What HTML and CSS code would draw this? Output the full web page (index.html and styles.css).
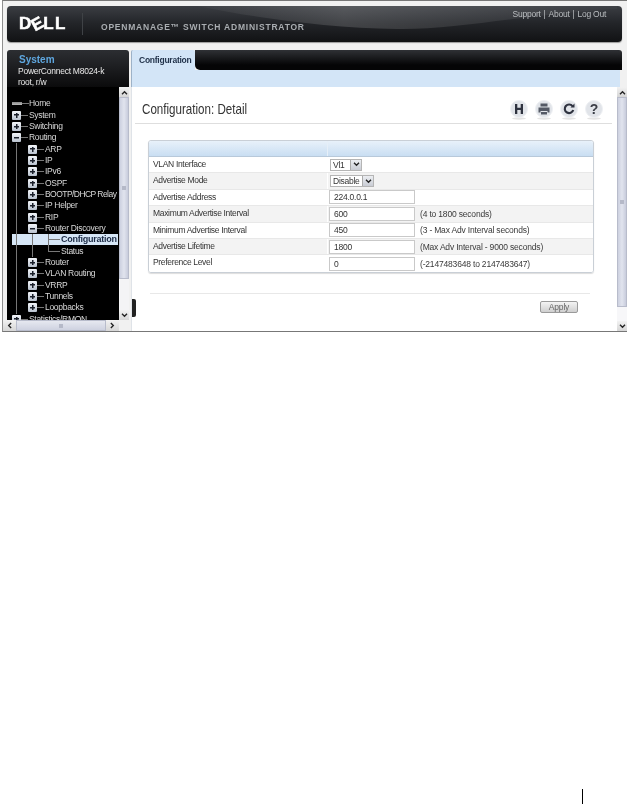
FILE: index.html
```html
<!DOCTYPE html>
<html lang="en">
<head>
<meta charset="utf-8">
<title>Configuration: Detail</title>
<link rel="stylesheet" href="styles.css">
</head>
<body>
<div class="frame">
  <header class="masthead">
    <svg class="swoosh" viewBox="0 0 615 36" preserveAspectRatio="none" aria-hidden="true">
      <defs>
        <linearGradient id="sw" x1="0" x2="1" y1="0" y2="0">
          <stop offset="0" stop-color="#fff" stop-opacity=".02"/>
          <stop offset=".35" stop-color="#fff" stop-opacity=".15"/>
          <stop offset="1" stop-color="#fff" stop-opacity=".02"/>
        </linearGradient>
      </defs>
      <path d="M190 0C250 12 320 22 390 23C450 24 520 8 610 3L610 0Z" fill="url(#sw)"/>
    </svg>
    <div class="logo">D<span class="logo-e">E</span>LL</div>
    <div class="product">OPENMANAGE™ SWITCH ADMINISTRATOR</div>
    <nav class="links">Support<span class="sep">|</span>About<span class="sep">|</span>Log Out</nav>
  </header>

  <div class="main">
    <aside class="sidebar">
      <div class="sys">
        <div class="sys-name">System</div>
        <div>PowerConnect M8024-k</div>
        <div>root, r/w</div>
      </div>
      <div class="sys-body">
        <div class="tree">
          <div class="row"><i class="leaf"></i><i class="dash short"></i><span>Home</span></div>
          <div class="row"><i class="exp plus"></i><i class="dash"></i><span>System</span></div>
          <div class="row"><i class="exp plus"></i><i class="dash"></i><span>Switching</span></div>
          <div class="row"><i class="exp"></i><i class="dash"></i><span>Routing</span></div>
          <div class="row"><i class="guide"></i><i class="exp plus"></i><i class="dash"></i><span>ARP</span></div>
          <div class="row"><i class="guide"></i><i class="exp plus"></i><i class="dash"></i><span>IP</span></div>
          <div class="row"><i class="guide"></i><i class="exp plus"></i><i class="dash"></i><span>IPv6</span></div>
          <div class="row"><i class="guide"></i><i class="exp plus"></i><i class="dash"></i><span>OSPF</span></div>
          <div class="row"><i class="guide"></i><i class="exp plus"></i><i class="dash"></i><span class="tight">BOOTP/DHCP Relay</span></div>
          <div class="row"><i class="guide"></i><i class="exp plus"></i><i class="dash"></i><span>IP Helper</span></div>
          <div class="row"><i class="guide"></i><i class="exp plus"></i><i class="dash"></i><span>RIP</span></div>
          <div class="row"><i class="guide"></i><i class="exp"></i><i class="dash"></i><span>Router Discovery</span></div>
          <div class="row selected"><i class="guide"></i><i class="guide"></i><i class="tee"></i><span>Configuration</span></div>
          <div class="row"><i class="guide"></i><i class="guide"></i><i class="elbow"></i><span>Status</span></div>
          <div class="row"><i class="guide"></i><i class="exp plus"></i><i class="dash"></i><span>Router</span></div>
          <div class="row"><i class="guide"></i><i class="exp plus"></i><i class="dash"></i><span>VLAN Routing</span></div>
          <div class="row"><i class="guide"></i><i class="exp plus"></i><i class="dash"></i><span>VRRP</span></div>
          <div class="row"><i class="guide"></i><i class="exp plus"></i><i class="dash"></i><span>Tunnels</span></div>
          <div class="row"><i class="guide"></i><i class="exp plus"></i><i class="dash"></i><span>Loopbacks</span></div>
          <div class="row"><i class="exp plus"></i><i class="dash"></i><span>Statistics/RMON</span></div>
        </div>
        <div class="vbar">
          <div class="sb-btn"><svg viewBox="0 0 8 6"><path d="M1 5l3-3 3 3" /></svg></div>
          <div class="sb-thumb narrow"><i class="grip"></i></div>
          <div class="sb-track"></div>
          <div class="sb-btn"><svg viewBox="0 0 8 6"><path d="M1 1l3 3 3-3" /></svg></div>
        </div>
      </div>
      <div class="hbar">
        <div class="sb-btn h"><svg viewBox="0 0 6 8"><path d="M5 1L2 4l3 3" /></svg></div>
        <div class="sb-thumb horiz"><i class="grip"></i></div>
        <div class="sb-btn h"><svg viewBox="0 0 6 8"><path d="M1 1l3 3-3 3" /></svg></div>
      </div>
    </aside>

    <section class="panel">
      <div class="tabs">
        <div class="tab">Configuration</div>
        <div class="tabfill"></div>
      </div>
      <div class="band"></div>
      <div class="pane">
        <div class="handle"></div>
        <main class="page">
          <div class="titlebar">
            <h1>Configuration: Detail</h1>
            <div class="tools">
              <svg class="tool" viewBox="0 0 18 20"><ellipse class="shade" cx="9" cy="18.500" rx="7" ry="1.200"/><circle class="disc" cx="9" cy="9" r="8.500"/><path class="ink" d="M5 4h2.300v3.800h3.400V4H13v10h-2.300v-4H7.300v4H5z"/></svg>
              <svg class="tool" viewBox="0 0 18 20"><ellipse class="shade" cx="9" cy="18.500" rx="7" ry="1.200"/><circle class="disc" cx="9" cy="9" r="8.500"/><path class="ink soft" d="M5.500 3.500h7v3h-7zM3.500 7.500h11v5h-2v-1.500h-7v1.500h-2zM6 12h6v2.500H6z"/></svg>
              <svg class="tool" viewBox="0 0 18 20"><ellipse class="shade" cx="9" cy="18.500" rx="7" ry="1.200"/><circle class="disc" cx="9" cy="9" r="8.500"/><path class="arc" d="M12.500 6.200A4.300 4.300 0 1 0 13.200 10"/><path class="ink" d="M10.500 7.500h4v-4z"/></svg>
              <svg class="tool" viewBox="0 0 18 20"><ellipse class="shade" cx="9" cy="18.500" rx="7" ry="1.200"/><circle class="disc" cx="9" cy="9" r="8.500"/><text class="qm" x="9" y="13.800" text-anchor="middle">?</text></svg>
            </div>
          </div>

          <div class="card">
            <div class="card-head"><div></div><div class="head-cell"></div></div>
            <div class="f-row"><div class="f-label">VLAN Interface</div><div class="f-val"><div class="select small"><span>Vl1</span><b><svg viewBox="0 0 8 6"><path d="M1 1l3 3 3-3"/></svg></b></div></div></div>
            <div class="f-row alt"><div class="f-label">Advertise Mode</div><div class="f-val"><div class="select"><span>Disable</span><b><svg viewBox="0 0 8 6"><path d="M1 1l3 3 3-3"/></svg></b></div></div></div>
            <div class="f-row"><div class="f-label">Advertise Address</div><div class="f-val"><input class="inp" value="224.0.0.1"></div></div>
            <div class="f-row alt"><div class="f-label">Maximum Advertise Interval</div><div class="f-val"><input class="inp" value="600"><span class="hint">(4 to 1800 seconds)</span></div></div>
            <div class="f-row"><div class="f-label">Minimum Advertise Interval</div><div class="f-val"><input class="inp" value="450"><span class="hint">(3 - Max Adv Interval seconds)</span></div></div>
            <div class="f-row alt"><div class="f-label">Advertise Lifetime</div><div class="f-val"><input class="inp" value="1800"><span class="hint">(Max Adv Interval - 9000 seconds)</span></div></div>
            <div class="f-row last"><div class="f-label">Preference Level</div><div class="f-val"><input class="inp" value="0"><span class="hint">(-2147483648 to 2147483647)</span></div></div>
          </div>

          <div class="actions"><button class="apply" type="button">Apply</button></div>
        </main>
        <div class="vbar main-bar">
          <div class="sb-btn"><svg viewBox="0 0 8 6"><path d="M1 5l3-3 3 3" /></svg></div>
          <div class="sb-thumb tall"><i class="grip"></i></div>
          <div class="sb-track"></div>
          <div class="sb-btn"><svg viewBox="0 0 8 6"><path d="M1 1l3 3 3-3" /></svg></div>
        </div>
      </div>
    </section>
  </div>
</div>
<div class="page-marker"></div>
</body>
</html>
```
FILE: styles.css
```css
* { box-sizing: border-box; }
html, body { margin: 0; padding: 0; background: #fff; }
body { font-family: "Liberation Sans", Arial, sans-serif; font-size: 8.5px; letter-spacing: -.25px; color: #333; }

.frame {
  width: 625px; height: 332px; margin-left: 2px;
  display: flex; flex-direction: column;
  padding: 5px 0 0 4px;
  background: #f1f1f1;
  border-left: 1px solid #8f8f8f; border-top: 1px solid #777; border-bottom: 1px solid #777;
  filter: blur(.3px);
}

/* masthead */
.masthead {
  position: relative; flex: none;
  height: 36px; margin: 0 5px 8px 0;
  display: flex; align-items: center;
  padding-left: 12px;
  border-radius: 4px;
  background: linear-gradient(#3b3e43, #24262a 45%, #111214);
  box-shadow: 0 1px 1px #999;
  overflow: hidden;
}
.swoosh { position: absolute; left: 0; top: 0; width: 100%; height: 100%; }
.logo {
  width: 64px; height: 22px; line-height: 22px; flex: none;
  font-size: 17px; font-weight: 700; color: #fff;
  letter-spacing: 1.3px;
  -webkit-text-stroke: .5px #fff;
  border-right: 1px solid #3f4246;
  margin-right: 18px;
}
.logo-e { display: inline-block; transform: rotate(-28deg); margin: 0 -1px; }
.product {
  font-size: 8.5px; font-weight: 700; letter-spacing: .78px;
  color: #a9adb1; margin-top: 5px; white-space: nowrap;
}
.links {
  margin-left: auto; align-self: flex-start;
  margin-top: 3px; padding-right: 16px;
  line-height: 10px; color: #b9bcbf; white-space: nowrap; position: relative;
}
.sep { margin: 0 3px; }

/* main area */
.main { flex: 1; min-height: 0; display: flex; }

/* sidebar */
.sidebar { width: 122px; flex: none; display: flex; flex-direction: column; margin-right: 2px; }
.sys {
  height: 37px; flex: none; padding: 4px 0 0 11px;
  background: linear-gradient(#2c2e32, #0b0b0c);
  border-radius: 3px 3px 0 0;
  color: #e8e8e8; line-height: 10.500px;
}
.sys-name { font-size: 10px; font-weight: 700; color: #5ea6de; line-height: 12px; letter-spacing: 0; padding-left: 1px; }
.sys-body { flex: 1; min-height: 0; display: flex; }
.tree {
  flex: 1; min-width: 0; overflow: hidden;
  background: #000; padding-top: 11px; color: #d9d9d9; letter-spacing: -.3px;
}
.tight { letter-spacing: -.55px; }
.row {
  height: 11.35px; display: flex; align-items: center;
  margin-left: 5px; white-space: nowrap; line-height: 11px;
}
.row i { display: block; flex: none; height: 100%; }
.row .exp {
  width: 9px; height: 9px;
  background:
    linear-gradient(#1a1f2a, #1a1f2a) center / 5px 1.5px no-repeat,
    linear-gradient(#f2f5f9, #b9c2cf);
  border-radius: 1px;
}
.row .exp.plus {
  background:
    linear-gradient(#1a1f2a, #1a1f2a) center / 5px 1.5px no-repeat,
    linear-gradient(#1a1f2a, #1a1f2a) center / 1.5px 5px no-repeat,
    linear-gradient(#f2f5f9, #b9c2cf);
}
.row .leaf { width: 10px; height: 3px; background: linear-gradient(#888, #bbb); }
.row .dash {
  width: 8px;
  background: linear-gradient(#777, #777) left center / 7px 1px no-repeat;
}
.row .dash.short { width: 7px; }
.row .guide {
  width: 16px;
  background: linear-gradient(#777, #777) 4px 0 / 1px 100% no-repeat;
}
.row .tee, .row .elbow {
  width: 17px;
  background:
    linear-gradient(#777, #777) 4px center / 12px 1px no-repeat,
    linear-gradient(#777, #777) 4px 0 / 1px 100% no-repeat;
}
.row .elbow {
  background:
    linear-gradient(#777, #777) 4px center / 12px 1px no-repeat,
    linear-gradient(#777, #777) 4px 0 / 1px 50% no-repeat;
}
.row.selected { background: #d6e6f6; color: #1b2a44; margin-right: 1px; }
.row.selected span { font-size: 9px; font-weight: 700; letter-spacing: -.25px; }

/* scrollbars */
.vbar { width: 10px; flex: none; display: flex; flex-direction: column; background: #f4f4f6; }
.sb-btn {
  width: 10px; height: 10px; flex: none;
  display: flex; align-items: center; justify-content: center;
  background: linear-gradient(#f2f2f2, #d6d6d6);
}
.sb-btn.h { width: 13px; height: 11px; }
.sb-btn svg, .select svg { width: 7px; height: 5px; }
.sb-btn.h svg { width: 5px; height: 7px; }
.sb-btn path, .select path { fill: none; stroke: #222; stroke-width: 1.6; }
.sb-thumb {
  display: flex; align-items: center; justify-content: center; flex: none;
  background: linear-gradient(90deg, #cdd1e0, #e1e4ee 50%, #c8ccdc);
  border: 1px solid #b8bccb;
}
.sb-thumb.narrow { height: 182px; }
.sb-thumb.tall { height: 210px; }
.sb-thumb.horiz { flex: 1; height: 11px; background: linear-gradient(#e6e8f0, #ced2e0); }
.grip { display: block; width: 4px; height: 4px; background: #b5b9c8; }
.sb-track { flex: 1; }
.hbar { flex: none; height: 11px; display: flex; margin: 0 10px 0 -4px; background: #f0f0f0; }

/* right panel */
.panel { flex: 1; min-width: 0; display: flex; flex-direction: column; }
.tabs { flex: none; height: 20px; display: flex; margin-right: 5px; }
.tab {
  width: 64px; flex: none; padding-left: 7px;
  font-weight: 700; line-height: 21px; color: #23344c;
  background: #d3e5f7;
  border-left: 1px solid #9db2c8;
  border-radius: 2px 2px 0 0;
}
.tabfill {
  flex: 1; background: linear-gradient(#2f3135, #050506 75%);
  border-radius: 0 3px 0 5px;
}
.band { flex: none; height: 17px; background: #d3e5f7; margin-right: 7px; border-left: 1px solid #9db2c8; }
.pane { flex: 1; min-height: 0; display: flex; position: relative; }
.handle {
  position: absolute; left: 1px; top: 212px;
  width: 4px; height: 18px; background: #222; border-radius: 0 2px 2px 0;
}
.page { flex: 1; min-width: 0; background: #fff; border-left: 1px solid #dfe3e8; }
.main-bar { background: #f7f7f9; }

.titlebar {
  height: 37px; margin: 0 5px 0 3px; padding: 8px 9px 0 7px;
  display: flex; align-items: center; justify-content: space-between;
  border-bottom: 1px solid #dedede;
}
h1 {
  margin: 0; font-size: 14.5px; font-weight: 400; color: #333; letter-spacing: 0;
  white-space: nowrap; transform: scaleX(.8); transform-origin: left center;
}
.tools { display: flex; gap: 7px; }
.tool { width: 18px; height: 20px; display: block; margin-top: 2px; }
.shade { fill: #e4e4e4; }
.disc { fill: #e1e4e9; stroke: #eef0f3; }
.ink { fill: #2f3340; }
.ink.soft { fill: #555a66; }
.arc { fill: none; stroke: #2f3340; stroke-width: 2.2; }
.qm { font-family: "Liberation Sans", Arial, sans-serif; font-size: 14px; font-weight: 700; fill: #3a3d46; }

.card {
  margin: 16px 0 0 16px; width: 446px;
  border: 1px solid #c9cfd6; border-radius: 3px; overflow: hidden;
  box-shadow: 0 1px 1px #ddd;
}
.card-head {
  height: 16px; display: grid; grid-template-columns: 178px 1fr;
  background: linear-gradient(#e8f1fa, #c9deF2);
  border-bottom: 1px solid #b8c9da;
}
.head-cell { border-left: 1px solid #e6eff8; }
.f-row {
  height: 16.4px; display: grid; grid-template-columns: 178px 1fr;
  border-bottom: 1px solid #e8e8e8; background: #fff;
}
.f-row.alt { background: #f3f3f3; }
.f-row.last { border-bottom: 0; }
.f-label { padding-left: 4px; line-height: 15.4px; color: #333; white-space: nowrap; letter-spacing: -.33px; }
.f-val {
  display: flex; align-items: center; padding-left: 1px;
  border-left: 1px solid #fff; white-space: nowrap;
}
.inp {
  width: 86px; height: 14px; padding: 0 4px; margin: 0;
  font: 8.5px "Liberation Sans", Arial, sans-serif; letter-spacing: -.25px; color: #333;
  background: #fff; border: 1px solid #c9c9c9; border-radius: 0; outline: 0;
}
.hint { margin-left: 5px; color: #3a3a3a; letter-spacing: -.18px; }
.select {
  width: 44px; height: 12px; margin-left: 1px;
  display: flex; align-items: center; justify-content: space-between;
  background: #fff; border: 1px solid #b5b5b5; padding-left: 2px;
  color: #333;
}
.select.small { width: 32px; }
.select b {
  width: 11px; height: 10px; display: flex; align-items: center; justify-content: center;
  background: linear-gradient(#eceef2, #c9ccd4); border: 1px solid #aaa; border-width: 0 0 0 1px;
}

.actions {
  margin: 20px 0 0 18px; width: 440px; padding: 7px 12px 0 0;
  display: flex; justify-content: flex-end;
  border-top: 1px solid #e8e8e8;
}
.apply {
  width: 38px; height: 12px; padding: 0; margin: 0;
  font: 8.5px/10px "Liberation Sans", Arial, sans-serif; letter-spacing: -.2px; color: #666;
  background: linear-gradient(#f4f4f4, #cfcfcf);
  border: 1px solid #9a9a9a; border-radius: 2px;
}

.page-marker { width: 1px; height: 15px; margin: 457px 0 0 582px; background: #000; }
```
